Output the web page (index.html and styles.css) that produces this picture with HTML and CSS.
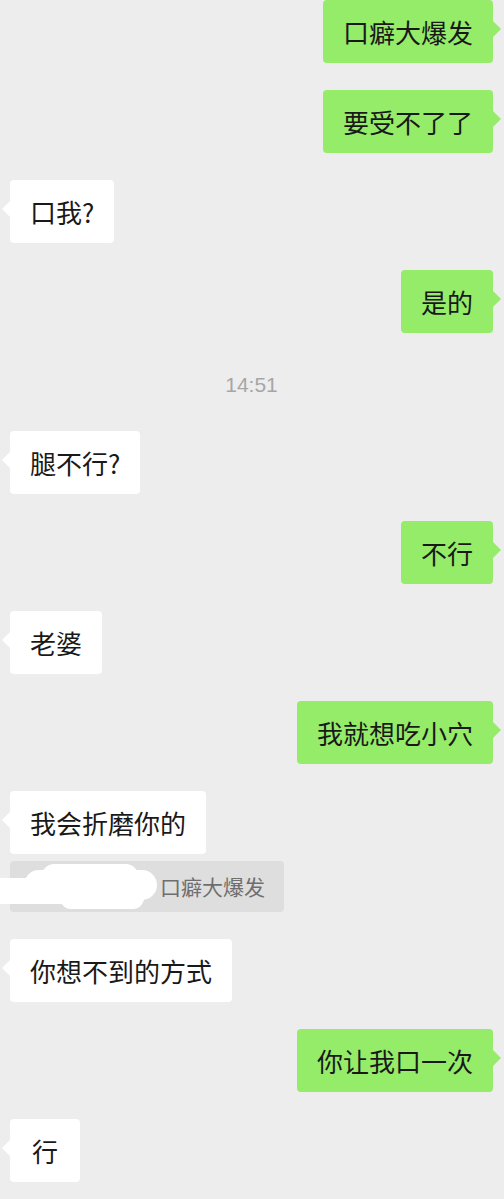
FILE: index.html
```html
<!DOCTYPE html>
<html lang="zh-CN">
<head>
    <meta charset="UTF-8">
    <meta name="viewport" content="width=device-width, initial-scale=1.0">
    <title>聊天</title>
    <link rel="stylesheet" href="styles.css">
</head>
<body>

<div class="chat">
    <div class="msg me"><div class="bubble">口癖大爆发</div></div>
    <div class="msg me"><div class="bubble">要受不了了</div></div>
    <div class="msg them"><div class="bubble">口我?</div></div>
    <div class="msg me"><div class="bubble">是的</div></div>

    <div class="time">14:51</div>

    <div class="msg them"><div class="bubble">腿不行?</div></div>
    <div class="msg me"><div class="bubble">不行</div></div>
    <div class="msg them"><div class="bubble">老婆</div></div>
    <div class="msg me"><div class="bubble">我就想吃小穴</div></div>

    <div class="msg them stack">
        <div class="bubble">我会折磨你的</div>
        <div class="quote">
            <!-- name is blanked out in the screenshot -->
            <span class="blot b1"></span>
            <span class="blot b2"></span>
            <span class="blot b3"></span>
            <span class="blot b4"></span>
            口癖大爆发
        </div>
    </div>

    <div class="msg them"><div class="bubble">你想不到的方式</div></div>
    <div class="msg me"><div class="bubble">你让我口一次</div></div>
    <div class="msg them"><div class="bubble wide">行</div></div>
</div>

<footer class="bar"></footer>

</body>
</html>
```

FILE: styles.css
```css
body {
    margin: 0;
    height: 1199px;
    overflow: hidden;
    background-color: #ededed;
    color: #191919;
    font-family: "Noto Sans CJK SC", "Noto Sans", sans-serif;
    display: flex;
    flex-direction: column;
}
.chat {
    flex: 1;
    display: flex;
    flex-direction: column;
    padding: 0 11px 0 10px;
}
.msg {
    display: flex;
    margin-bottom: 27px;
}
.msg.me {
    justify-content: flex-end;
}
.msg.stack {
    flex-direction: column;
    align-items: flex-start;
    gap: 7px;
}
.bubble {
    position: relative;
    font-size: 26px;
    line-height: 31px;
    padding: 16px 20px;
    border-radius: 4px;
    white-space: nowrap;
}
.bubble.wide {
    padding: 16px 22px;
}
.bubble::before {
    content: "";
    position: absolute;
    top: 21px;
    border: 8px solid transparent;
}
.them .bubble {
    background-color: #ffffff;
}
.them .bubble::before {
    left: -16px;
    border-right-color: #ffffff;
}
.me .bubble {
    background-color: #95ec69;
}
.me .bubble::before {
    right: -16px;
    border-left-color: #95ec69;
}
.time {
    height: 50px;
    line-height: 50px;
    margin-bottom: 21px;
    text-align: center;
    font-family: "Liberation Sans", Arial, sans-serif;
    font-size: 21px;
    color: #a6a6a6;
}
.quote {
    position: relative;
    height: 51px;
    line-height: 51px;
    padding: 0 19px 0 150px;
    background-color: #dedede;
    border-radius: 4px;
    font-size: 21px;
    color: #6e6e6e;
}
.blot {
    position: absolute;
    background-color: #ffffff;
    border-radius: 14px;
}
.b1 { left: 32px; top: 3px; width: 96px; height: 24px; }
.b2 { left: 14px; top: 9px; width: 133px; height: 30px; border-radius: 15px; }
.b3 { left: -10px; top: 17px; width: 80px; height: 26px; border-radius: 0 13px 13px 0; }
.b4 { left: 50px; top: 26px; width: 84px; height: 22px; border-radius: 11px; }
.bar {
    height: 8px;
    border-top: 1px solid #dddddd;
    background-color: #f6f6f6;
}
```
